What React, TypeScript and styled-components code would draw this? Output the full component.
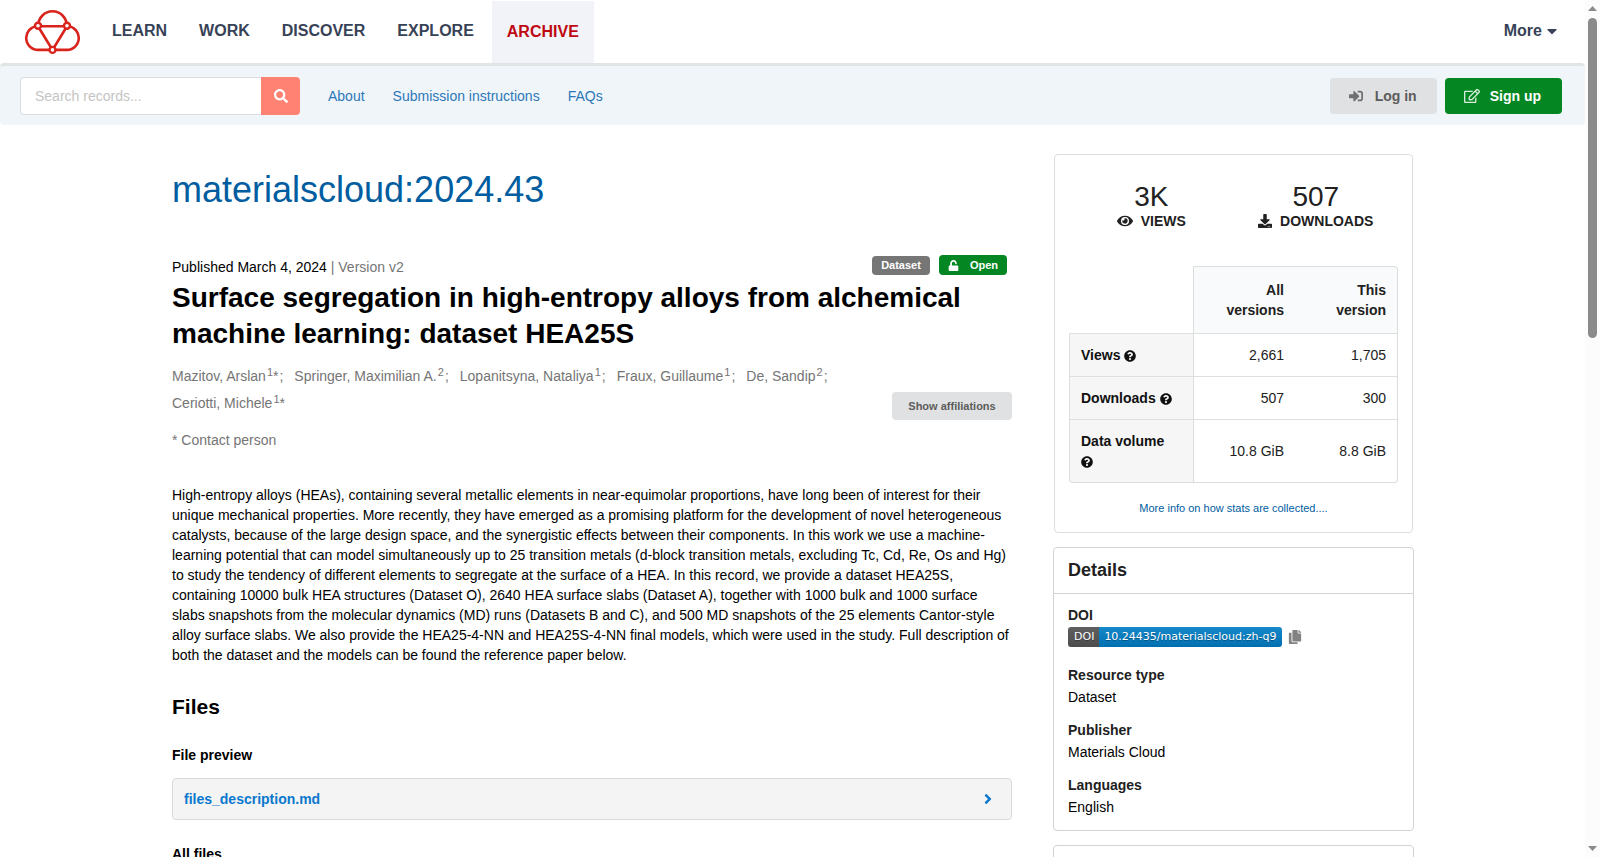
import React from "react";
import styled, { createGlobalStyle } from "styled-components";
import {
  FaAngleRight,
  FaCaretDown,
  FaCopy,
  FaDownload,
  FaEye,
  FaQuestionCircle,
  FaRegEdit,
  FaSearch,
  FaSignInAlt,
  FaUnlock,
} from "react-icons/fa";

const GlobalStyle = createGlobalStyle`
  *, *::before, *::after { box-sizing: border-box; }
  body {
    margin: 0;
    background: #fff;
    color: #000;
    font: 14px/20px "Liberation Sans", Arial, sans-serif;
  }
  a { text-decoration: none; color: #005d9f; }
  h1, h2, h3, p, dl, dd { margin: 0; }
  button, input { font: inherit; margin: 0; }
  svg { flex: none; }
`;

const Viewport = styled.div`
  display: grid;
  grid-template-columns: minmax(0, 1fr) 15px;
  height: 100vh;
  overflow: hidden;
`;

const Page = styled.div`
  overflow: hidden;
`;

const TopNav = styled.nav`
  display: flex;
  height: 63px;
  padding: 0 25px 0 24px;
  font-size: 16px;
  font-weight: bold;
`;

const LogoLink = styled.a`
  display: flex;
  align-items: center;
  margin-right: 14px;
`;

const NavLink = styled.a<{ $active?: boolean }>`
  display: flex;
  align-items: center;
  margin-top: ${(p) => (p.$active ? 1 : 0)}px;
  margin-left: ${(p) => (p.$active ? 2 : 0)}px;
  padding: ${(p) => (p.$active ? "0 15px" : "0 16px 2px")};
  background: ${(p) => (p.$active ? "#f2f3f8" : "transparent")};
  color: ${(p) => (p.$active ? "#bf0812" : "#374257")};
`;

const MoreButton = styled.button`
  display: flex;
  align-items: center;
  gap: 2px;
  margin-left: auto;
  padding: 0 0 2px;
  border: 0;
  background: none;
  color: #374257;
  font-weight: bold;
`;

const SubBar = styled.div`
  display: flex;
  align-items: center;
  height: 62px;
  padding: 0 23px 0 20px;
  border-top: 3px solid #dfe4e4;
  border-radius: 4px;
  background: #f0f5fa;
`;

const SearchForm = styled.form`
  display: flex;
  width: 280px;
  height: 38px;
  margin-right: 14px;
`;

const SearchInput = styled.input`
  flex: 1;
  min-width: 0;
  padding: 0 14px;
  border: 1px solid #dbdddf;
  border-right: 0;
  border-radius: 4px 0 0 4px;
  background: #fff;
  &::placeholder { color: #c4c4c4; opacity: 1; }
`;

const SearchButton = styled.button`
  display: flex;
  align-items: center;
  justify-content: center;
  width: 39px;
  padding: 0;
  border: 0;
  border-radius: 0 4px 4px 0;
  background: #ff8272;
  color: #fff;
`;

const SubLink = styled.a`
  padding: 0 14px;
  color: #2c78b7;
`;

const Actions = styled.div`
  display: flex;
  gap: 8px;
  margin-left: auto;
`;

const ActionButton = styled.button<{ $primary?: boolean }>`
  display: flex;
  align-items: center;
  gap: ${(p) => (p.$primary ? 10 : 12)}px;
  height: 36px;
  padding: ${(p) => (p.$primary ? "0 21px 0 19px" : "0 20px 0 19px")};
  border: 0;
  border-radius: 4px;
  background: ${(p) => (p.$primary ? "#048722" : "#e0e1e2")};
  color: ${(p) => (p.$primary ? "#fff" : "#5c5c5c")};
  font-weight: bold;
  svg { opacity: 0.85; }
`;

const Container = styled.div`
  display: grid;
  grid-template-columns: minmax(0, 840px) 361px;
  justify-content: center;
  gap: 41px;
  padding: 29px 15px 0 16px;
`;

const Community = styled.h2`
  padding-top: 15px;
  font-size: 36px;
  font-weight: normal;
  line-height: 42px;
`;

const MetaRow = styled.div`
  display: flex;
  align-items: flex-start;
  justify-content: space-between;
  margin-top: 44px;
  padding-right: 5px;
`;

const Published = styled.p`
  padding: 2px 0 1px;
`;

const Muted = styled.span`
  color: #757575;
`;

const Badges = styled.div`
  display: flex;
  align-items: center;
  gap: 9px;
`;

const Badge = styled.span<{ $open?: boolean }>`
  display: flex;
  align-items: center;
  gap: 11px;
  height: ${(p) => (p.$open ? 20 : 19)}px;
  padding: 0 9px;
  border-radius: 4px;
  background: ${(p) => (p.$open ? "#048722" : "#767676")};
  color: #fff;
  font-size: 11px;
  font-weight: bold;
`;

const Title = styled.h1`
  margin-top: 2px;
  font-size: 28px;
  line-height: 36px;
`;

const Creators = styled.div`
  display: flex;
  align-items: flex-end;
  justify-content: space-between;
  margin-top: 11px;
`;

const AuthorList = styled.ul`
  display: flex;
  flex-wrap: wrap;
  max-width: 680px;
  margin: 0;
  padding: 0 0 3px;
  list-style: none;
  color: #757575;
  line-height: 27px;
`;

const Author = styled.li`
  margin-right: 11px;
  sup {
    margin-left: 1px;
    font-size: 11px;
    line-height: 0;
    vertical-align: 5px;
  }
`;

const Separator = styled.span`
  margin-left: 1px;
`;

const SmallButton = styled.button`
  min-width: 120px;
  height: 28px;
  padding: 0 16px;
  border: 0;
  border-radius: 4px;
  background: #e0e1e2;
  color: #5c5c5c;
  font-size: 11px;
  font-weight: bold;
`;

const Contact = styled.p`
  margin-top: 10px;
  color: #757575;
`;

const Description = styled.p`
  margin-top: 35px;
`;

const SectionTitle = styled.h2`
  margin-top: 28px;
  font-size: 21px;
  line-height: 28px;
`;

const SubTitle = styled.h3`
  margin-top: 24px;
  font-size: 14px;
  line-height: 20px;
`;

const FileToggle = styled.button`
  display: flex;
  align-items: center;
  justify-content: space-between;
  width: 100%;
  height: 42px;
  margin-top: 13px;
  padding: 0 15px 0 11px;
  border: 1px solid #d9d9da;
  border-radius: 4px;
  background: #f4f4f4;
  color: #0b78ce;
  font-weight: bold;
`;

const Sidebar = styled.aside`
  display: flex;
  flex-direction: column;
  gap: 14px;
`;

const StatsCard = styled.section`
  margin: 0 1px;
  padding: 28px 14px 14px;
  border: 1px solid #dcdddd;
  border-radius: 4px;
  color: #212121;
  text-align: center;
`;

const Totals = styled.div`
  display: grid;
  grid-template-columns: 1fr 1fr;
`;

const TotalValue = styled.div`
  font-size: 28px;
  line-height: 28px;
`;

const TotalLabel = styled.div`
  display: flex;
  align-items: center;
  justify-content: center;
  gap: 8px;
  font-weight: bold;
`;

const StatsTable = styled.table`
  width: 100%;
  margin-top: 35px;
  border-collapse: separate;
  border-spacing: 0;
  table-layout: fixed;

  th, td { padding: 11px; text-align: right; line-height: 20px; }
  thead th {
    padding: 13px 11px 13px 24px;
    background: #f9fafb;
    border-top: 1px solid #dcdddd;
  }
  thead th:last-child { border-top-right-radius: 4px; }
  tbody th {
    border-left: 1px solid #dcdddd;
    background: #f6f6f6;
    color: #111;
    text-align: left;
  }
  tbody th, tbody td { border-top: 1px solid #dedfdf; }
  tbody tr:last-child > * { border-bottom: 1px solid #dcdddd; }
  tbody tr:last-child th { border-bottom-left-radius: 4px; }
  tbody tr:last-child td:last-child { border-bottom-right-radius: 4px; }
  tr > :nth-child(2) { border-left: 1px solid #dcdddd; }
  tr > :last-child { border-right: 1px solid #dcdddd; }
  thead td { padding: 0; }
  svg { margin-right: 6px; vertical-align: -2px; }
`;

const TableColumn = styled.col<{ $width?: number }>`
  width: ${(p) => (p.$width ? `${p.$width}px` : "auto")};
`;

const MoreInfo = styled.a`
  display: block;
  margin-top: 15px;
  font-size: 11px;
`;

const Card = styled.section`
  min-height: 46px;
  border: 1px solid #d2d3d4;
  border-radius: 4px;
  color: #000;
`;

const CardTitle = styled.h2`
  padding: 10px 14px 11px;
  border-bottom: 1px solid #d2d3d4;
  color: #212121;
  font-size: 18px;
  line-height: 24px;
`;

const DetailList = styled.dl`
  padding: 10px 14px 12px;
  dt { color: #212121; font-weight: bold; line-height: 22px; }
  dd { line-height: 22px; }
  dd + dt { margin-top: 11px; }
`;

const DoiRow = styled.dd`
  display: flex;
  align-items: flex-start;
  gap: 6px;
  height: 27px;
  padding-top: 1px;
`;

const DoiBadge = styled.a`
  display: flex;
  height: 20px;
  border-radius: 3px;
  overflow: hidden;
  color: #fff;
  font: 11px/20px "DejaVu Sans", Verdana, sans-serif;
  text-shadow: 0 1px rgba(1, 1, 1, 0.3);
`;

const DoiPart = styled.span<{ $value?: boolean }>`
  padding: ${(p) => (p.$value ? "0 6px 0 5px" : "0 5px 0 6px")};
  background: ${(p) =>
    p.$value
      ? "linear-gradient(#1589ca, #006fb0)"
      : "linear-gradient(#5f5f5f, #4c4c4c)"};
`;

const CopyButton = styled.button`
  display: flex;
  align-items: center;
  height: 20px;
  padding: 0;
  border: 0;
  background: none;
  color: #828282;
`;

const ScrollColumn = styled.div`
  display: flex;
  flex-direction: column;
  align-items: center;
  padding: 6px 0;
  background: #fcfcfc;
`;

const ScrollTrack = styled.div`
  flex: 1;
  width: 9px;
  margin: 7px 0;
`;

const ScrollThumb = styled.div`
  height: 39%;
  border-radius: 5px;
  background: #8b8b8b;
`;

const Logo = () => (
  <svg width="58" height="46" viewBox="0 0 58 46" fill="none" stroke="#d9231c" strokeWidth="2.6">
    <path d="M14.3 16.5A14.2 14.2 0 0 1 42.7 16.5M14 17.2H43M14 17.2 28.5 40.9 43 17.2" />
    <path d="M13 17C6 18.2 2.2 23.4 2.2 28.8C2.2 35.6 7.4 40.9 14 40.9H43C49.6 40.9 54.8 35.6 54.8 28.8C54.8 23.4 51 18.2 44 17" />
    <g fill="#fff" strokeWidth="2.4">
      <circle cx="14" cy="16.8" r="3" />
      <circle cx="43" cy="16.8" r="3" />
      <circle cx="28.5" cy="40.9" r="3" />
    </g>
  </svg>
);

const Arrow = ({ down }: { down?: boolean }) => (
  <svg width="9" height="5" viewBox="0 0 9 5" fill="#8b8b8b">
    <path d={down ? "M0 0H9L4.5 5Z" : "M0 5H9L4.5 0Z"} />
  </svg>
);

const navItems = ["LEARN", "WORK", "DISCOVER", "EXPLORE", "ARCHIVE"];

const authors = [
  { name: "Mazitov, Arslan", ref: "1", contact: true },
  { name: "Springer, Maximilian A.", ref: "2" },
  { name: "Lopanitsyna, Nataliya", ref: "1" },
  { name: "Fraux, Guillaume", ref: "1" },
  { name: "De, Sandip", ref: "2" },
  { name: "Ceriotti, Michele", ref: "1", contact: true },
];

const stats = [
  ["Views", "2,661", "1,705"],
  ["Downloads", "507", "300"],
  ["Data volume", "10.8 GiB", "8.8 GiB"],
];

const details = [
  ["Resource type", "Dataset"],
  ["Publisher", "Materials Cloud"],
  ["Languages", "English"],
];

export default function App() {
  return (
    <Viewport>
      <GlobalStyle />
      <Page>
        <TopNav>
          <LogoLink href="#" aria-label="Materials Cloud">
            <Logo />
          </LogoLink>
          {navItems.map((item) => (
            <NavLink key={item} href="#" $active={item === "ARCHIVE"}>
              {item}
            </NavLink>
          ))}
          <MoreButton type="button">
            More <FaCaretDown />
          </MoreButton>
        </TopNav>
        <SubBar>
          <SearchForm>
            <SearchInput aria-label="Search records" placeholder="Search records..." />
            <SearchButton type="button" aria-label="Search">
              <FaSearch size={14} />
            </SearchButton>
          </SearchForm>
          <SubLink href="#">About</SubLink>
          <SubLink href="#">Submission instructions</SubLink>
          <SubLink href="#">FAQs</SubLink>
          <Actions>
            <ActionButton type="button">
              <FaSignInAlt size={14} />
              Log in
            </ActionButton>
            <ActionButton type="button" $primary>
              <FaRegEdit size={16} />
              Sign up
            </ActionButton>
          </Actions>
        </SubBar>
        <Container>
          <main>
            <Community>
              <a href="#">materialscloud:2024.43</a>
            </Community>
            <MetaRow>
              <Published>
                Published March 4, 2024 <Muted>| Version v2</Muted>
              </Published>
              <Badges>
                <Badge>Dataset</Badge>
                <Badge $open>
                  <FaUnlock size={11} />
                  Open
                </Badge>
              </Badges>
            </MetaRow>
            <Title>
              Surface segregation in high-entropy alloys from alchemical machine learning: dataset
              HEA25S
            </Title>
            <Creators>
              <AuthorList>
                {authors.map((a, i) => (
                  <Author key={a.name}>
                    {a.name}
                    <sup>{a.ref}</sup>
                    {a.contact && "*"}
                    {i < authors.length - 1 && <Separator>;</Separator>}
                  </Author>
                ))}
              </AuthorList>
              <SmallButton type="button">Show affiliations</SmallButton>
            </Creators>
            <Contact>* Contact person</Contact>
            <Description>
              High-entropy alloys (HEAs), containing several metallic elements in near-equimolar
              proportions, have long been of interest for their unique mechanical properties. More
              recently, they have emerged as a promising platform for the development of novel
              heterogeneous catalysts, because of the large design space, and the synergistic
              effects between their components. In this work we use a machine-learning potential
              that can model simultaneously up to 25 transition metals (d-block transition metals,
              excluding Tc, Cd, Re, Os and Hg) to study the tendency of different elements to
              segregate at the surface of a HEA. In this record, we provide a dataset HEA25S,
              containing 10000 bulk HEA structures (Dataset O), 2640 HEA surface slabs (Dataset A),
              together with 1000 bulk and 1000 surface slabs snapshots from the molecular dynamics
              (MD) runs (Datasets B and C), and 500 MD snapshots of the 25 elements Cantor-style
              alloy surface slabs. We also provide the HEA25-4-NN and HEA25S-4-NN final models,
              which were used in the study. Full description of both the dataset and the models can
              be found the reference paper below.
            </Description>
            <SectionTitle>Files</SectionTitle>
            <SubTitle>File preview</SubTitle>
            <FileToggle type="button">
              files_description.md
              <FaAngleRight size={16} />
            </FileToggle>
            <SubTitle>All files</SubTitle>
          </main>
          <Sidebar>
            <StatsCard>
              <Totals>
                <div>
                  <TotalValue>3K</TotalValue>
                  <TotalLabel>
                    <FaEye size={16} />
                    VIEWS
                  </TotalLabel>
                </div>
                <div>
                  <TotalValue>507</TotalValue>
                  <TotalLabel>
                    <FaDownload size={14} />
                    DOWNLOADS
                  </TotalLabel>
                </div>
              </Totals>
              <StatsTable>
                <colgroup>
                  <TableColumn $width={124} />
                  <TableColumn $width={102} />
                  <TableColumn />
                </colgroup>
                <thead>
                  <tr>
                    <td />
                    <th scope="col">All versions</th>
                    <th scope="col">This version</th>
                  </tr>
                </thead>
                <tbody>
                  {stats.map(([label, all, current]) => (
                    <tr key={label}>
                      <th scope="row">
                        {label} <FaQuestionCircle size={12} />
                      </th>
                      <td>{all}</td>
                      <td>{current}</td>
                    </tr>
                  ))}
                </tbody>
              </StatsTable>
              <MoreInfo href="#">More info on how stats are collected....</MoreInfo>
            </StatsCard>
            <Card>
              <CardTitle>Details</CardTitle>
              <DetailList>
                <dt>DOI</dt>
                <DoiRow>
                  <DoiBadge href="#">
                    <DoiPart>DOI</DoiPart>
                    <DoiPart $value>10.24435/materialscloud:zh-q9</DoiPart>
                  </DoiBadge>
                  <CopyButton type="button" aria-label="Copy DOI">
                    <FaCopy size={14} />
                  </CopyButton>
                </DoiRow>
                {details.map(([term, value]) => (
                  <React.Fragment key={term}>
                    <dt>{term}</dt>
                    <dd>{value}</dd>
                  </React.Fragment>
                ))}
              </DetailList>
            </Card>
            <Card />
          </Sidebar>
        </Container>
      </Page>
      <ScrollColumn aria-hidden="true">
        <Arrow />
        <ScrollTrack>
          <ScrollThumb />
        </ScrollTrack>
        <Arrow down />
      </ScrollColumn>
    </Viewport>
  );
}
